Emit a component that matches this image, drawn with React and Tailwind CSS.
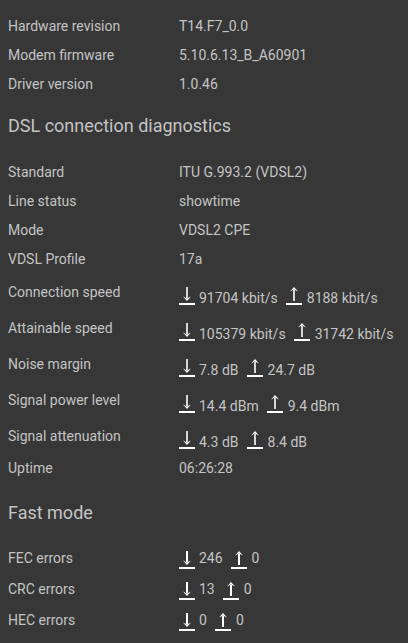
import React from "react";

const font = { fontFamily: "Roboto, 'Noto Sans', sans-serif" };

const ArrowDown = ({ bold }) => (
  <svg width="16" height="18" viewBox="0 0 16 18" className="shrink-0">
    <line x1="8" y1="0" x2="8" y2="11" stroke="#fff" strokeWidth={bold ? 2 : 1.6} />
    <polygon points="4,9.5 8,14 12,9.5 8,11.5" fill="#fff" />
    <rect x="0" y="16" width="16" height="2" fill="#fff" />
  </svg>
);

const ArrowUp = ({ bold }) => (
  <svg width="16" height="18" viewBox="0 0 16 18" className="shrink-0">
    <line x1="8" y1="3" x2="8" y2="14" stroke="#fff" strokeWidth={bold ? 2 : 1.6} />
    <polygon points="4,4.5 8,0 12,4.5 8,2.5" fill="#fff" />
    <rect x="0" y="16" width="16" height="2" fill="#fff" />
  </svg>
);

const Row = ({ label, value }) => (
  <div className="flex items-center h-[29px]">
    <div className="w-[171px] shrink-0">{label}</div>
    <div>{value}</div>
  </div>
);

const SpeedRow = ({ label, down, up }) => (
  <div className="flex items-center h-[36px]">
    <div className="w-[171px] shrink-0">{label}</div>
    <div className="flex items-end mt-[8px]">
      <ArrowDown />
      <span className="ml-[4px] leading-[14px]">{down}</span>
      <span className="ml-[8px]">
        <ArrowUp />
      </span>
      <span className="ml-[5px] leading-[14px]">{up}</span>
    </div>
  </div>
);

const ErrorRow = ({ label, down, up }) => (
  <div className="flex items-center h-[31px]">
    <div className="w-[171px] shrink-0">{label}</div>
    <div className="flex items-center">
      <span className="mt-[3px]">
        <ArrowDown bold />
      </span>
      <span className="ml-[4px]">{down}</span>
      <span className="ml-[8px] mt-[3px]">
        <ArrowUp bold />
      </span>
      <span className="ml-[5px]">{up}</span>
    </div>
  </div>
);

export default function App() {
  return (
    <div
      className="w-[408px] h-[643px] overflow-hidden bg-[#373737] text-[#c4c4c4] text-[14px] px-[8px] pt-[12px]"
      style={font}
    >
      <Row label="Hardware revision" value="T14.F7_0.0" />
      <Row label="Modem firmware" value="5.10.6.13_B_A60901" />
      <Row label="Driver version" value="1.0.46" />

      <h2 className="text-[18px] leading-[24px] mt-[15px] mb-[20px]">DSL connection diagnostics</h2>

      <Row label="Standard" value="ITU G.993.2 (VDSL2)" />
      <Row label="Line status" value="showtime" />
      <Row label="Mode" value="VDSL2 CPE" />
      <Row label="VDSL Profile" value="17a" />
      <SpeedRow label="Connection speed" down="91704 kbit/s" up="8188 kbit/s" />
      <SpeedRow label="Attainable speed" down="105379 kbit/s" up="31742 kbit/s" />
      <SpeedRow label="Noise margin" down="7.8 dB" up="24.7 dB" />
      <SpeedRow label="Signal power level" down="14.4 dBm" up="9.4 dBm" />
      <SpeedRow label="Signal attenuation" down="4.3 dB" up="8.4 dB" />
      <Row label="Uptime" value="06:26:28" />

      <h2 className="text-[18px] leading-[24px] mt-[18px] mb-[18px]">Fast mode</h2>

      <ErrorRow label="FEC errors" down="246" up="0" />
      <ErrorRow label="CRC errors" down="13" up="0" />
      <ErrorRow label="HEC errors" down="0" up="0" />
    </div>
  );
}
